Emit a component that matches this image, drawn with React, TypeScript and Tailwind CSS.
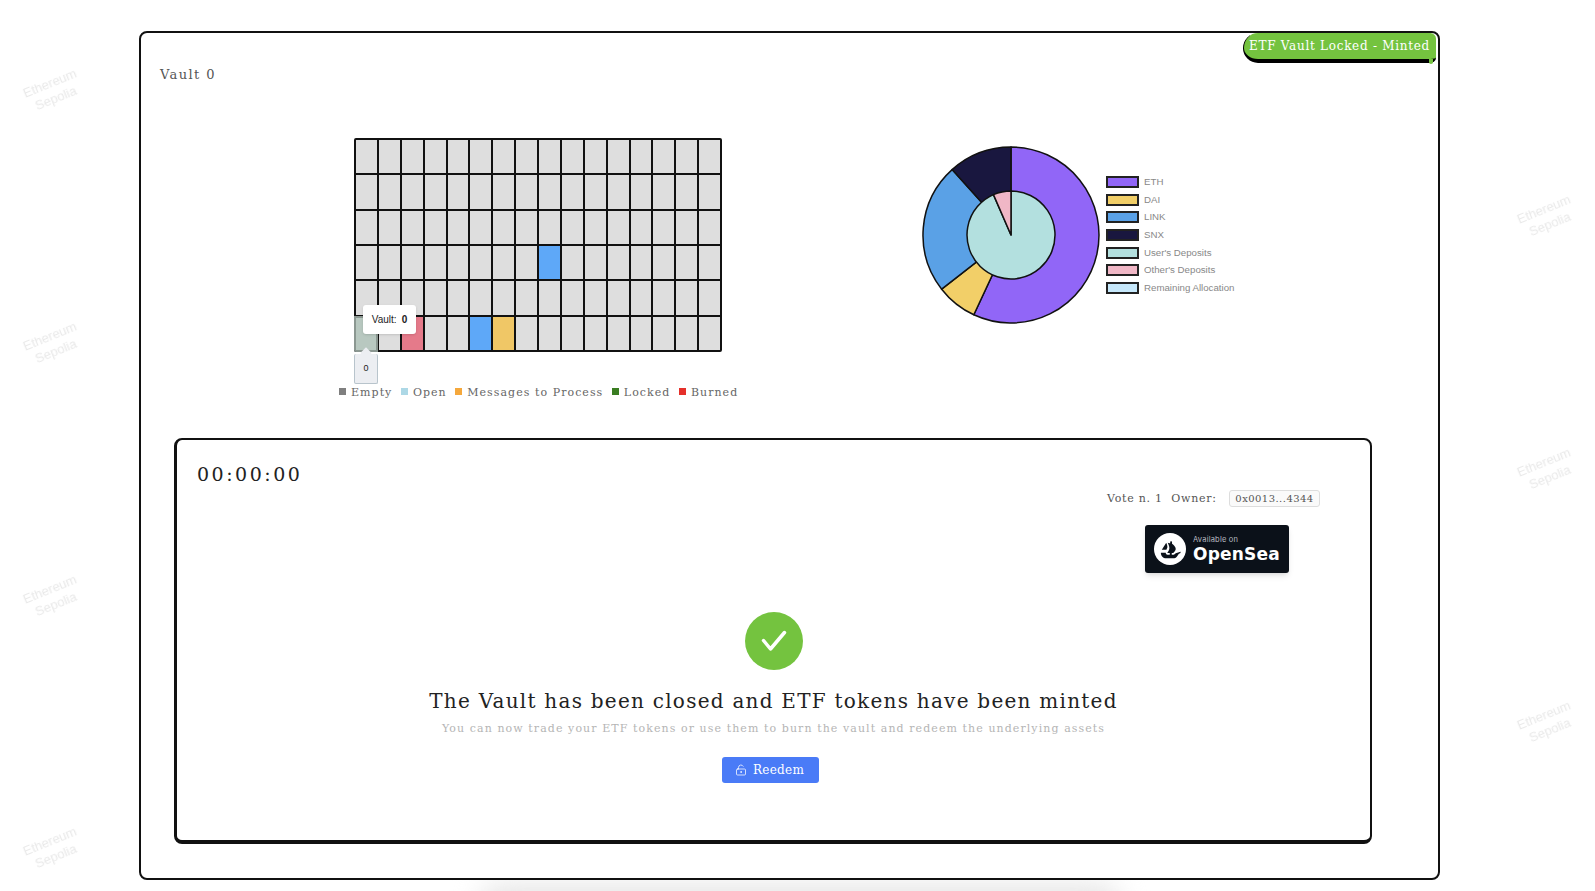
import { LockKeyholeOpen } from "lucide-react";

const CENTER = 90;
function sector(r: number, from: number, to: number) {
  const p = (a: number) => {
    const t = ((a - 90) * Math.PI) / 180;
    return `${(CENTER + r * Math.cos(t)).toFixed(2)} ${(CENTER + r * Math.sin(t)).toFixed(2)}`;
  };
  return `M${CENTER} ${CENTER} L${p(from)} A${r} ${r} 0 ${to - from > 180 ? 1 : 0} 1 ${p(to)} Z`;
}

const outer = [
  { c: "#9166f7", a: 0, b: 205 },
  { c: "#f2cf68", a: 205, b: 232 },
  { c: "#5aa1e6", a: 232, b: 318 },
  { c: "#19173f", a: 318, b: 360 },
];
const inner = [
  { c: "#b3e0df", a: 0, b: 336.5 },
  { c: "#f0b7c6", a: 336.5, b: 360 },
];
const pieLegend = [
  { c: "bg-[#9166f7]", t: "ETH" },
  { c: "bg-[#f2cf68]", t: "DAI" },
  { c: "bg-[#5aa1e6]", t: "LINK" },
  { c: "bg-[#19173f]", t: "SNX" },
  { c: "bg-[#b3e0df]", t: "User's Deposits" },
  { c: "bg-[#f0b7c6]", t: "Other's Deposits" },
  { c: "bg-[#c6e8fb]", t: "Remaining Allocation" },
];
const statusLegend = [
  { c: "bg-[#7f7f7f]", t: "Empty" },
  { c: "bg-[#add8e6]", t: "Open" },
  { c: "bg-[#f5a83c]", t: "Messages to Process" },
  { c: "bg-[#3a7d22]", t: "Locked" },
  { c: "bg-[#e5302a]", t: "Burned" },
];
const special: Record<string, string> = {
  "3-8": "bg-[#5ea8f8]",
  "5-2": "bg-[#e57a8a]",
  "5-5": "bg-[#5ea8f8]",
  "5-6": "bg-[#f0c766]",
};
const marks = [
  "left-[18px] top-[75px]",
  "left-[18px] top-[328px]",
  "left-[18px] top-[581px]",
  "left-[18px] top-[833px]",
  "left-[1512px] top-[201px]",
  "left-[1512px] top-[454px]",
  "left-[1512px] top-[707px]",
];

function Cell({ k }: { k: string }) {
  return <div className={special[k] ?? "bg-[#dedede]"} />;
}

export default function App() {
  const rows = [0, 1, 2, 3, 4, 5];
  const cols = Array.from({ length: 16 }, (_, i) => i);
  return (
    <div className="relative h-[891px] w-full overflow-hidden bg-white pt-[31px] font-['DejaVu_Serif',serif]">
      {marks.map((m) => (
        <div
          key={m}
          className={`absolute ${m} w-[70px] -rotate-[22deg] text-center font-['Liberation_Sans',sans-serif] text-[13px] leading-[16px] text-[#e9e9e9] blur-[0.5px]`}
        >
          Ethereum
          <br />
          Sepolia
        </div>
      ))}
      <div className="absolute bottom-[-34px] left-[480px] h-[40px] w-[640px] rounded-full bg-[#e4e4e4] blur-[14px]" />

      <div className="relative ml-[139px] h-[849px] w-[1301px] rounded-lg border-2 border-[#111] bg-white pt-[33px]">
        <div className="absolute right-[2px] top-0 h-[30px] w-[193px]">
          <div className="flex h-full items-start justify-center rounded-l-[16px] rounded-r-md border-b-[4px] border-l border-black bg-[#74c33f] pt-[3px] pr-[1px] text-[12px] leading-[20px] tracking-[0.72px] text-white">
            ETF Vault Locked - Minted
          </div>
          <div className="absolute bottom-[-1px] right-[3px] h-[5px] w-[4px] rounded-b-sm bg-[#74c33f]" />
        </div>

        <div className="pl-[19px] text-[13px] leading-[18px] tracking-[1.4px] text-[#555]">Vault 0</div>

        <div className="mt-[54px] flex h-[300px] items-start pl-[198px]">
          <div className="w-[410px]">
            <div className="relative ml-[15px] h-[214px] w-[368px]">
              <div className="grid h-full w-full grid-cols-16 grid-rows-6 gap-[2px] rounded-[2px] border-2 border-[#111] bg-[#111]">
                {rows.map((r) => cols.map((c) => <Cell key={`${r}-${c}`} k={`${r}-${c}`} />))}
              </div>
              <div className="absolute left-0 top-[178px] h-[36px] w-[24px] rounded-bl-[2px] border-2 border-[#8b9791] bg-[#b8c8c0]" />
              <div className="absolute left-[9px] top-[167px] flex h-[29px] w-[53px] items-center justify-center gap-[5px] rounded-[3px] bg-white font-['Liberation_Sans',sans-serif] text-[10px] text-[#222] shadow-sm">
                <span>Vault:</span>
                <span className="font-bold">0</span>
              </div>
              <div className="absolute left-[8px] top-[211px] h-[8px] w-[8px] rotate-45 bg-[#eceef2]" />
              <div className="absolute left-0 top-[216px] flex h-[30px] w-[24px] items-center justify-center rounded-[2px] border border-t-0 border-[#b8c4cc] bg-[#eceef2] font-['Liberation_Sans',sans-serif] text-[9px] text-[#222]">
                0
              </div>
            </div>
            <div className="mt-[33px] flex h-[16px] items-center whitespace-nowrap text-[11px] leading-[16px] tracking-[1.05px] text-[#666]">
              {statusLegend.map((l) => (
                <div key={l.t} className="mr-[8.5px] flex items-center gap-[5px]">
                  <span className={`mb-[4px] h-[7px] w-[7px] ${l.c}`} />
                  <span>{l.t}</span>
                </div>
              ))}
            </div>
          </div>

          <div className="ml-[172px] mt-[7px] flex items-center gap-[5px]">
            <svg width="180" height="180" viewBox="0 0 180 180" className="shrink-0">
              {outer.map((s) => (
                <path key={s.c} d={sector(88, s.a, s.b)} fill={s.c} stroke="#111" strokeWidth="1.5" strokeLinejoin="round" />
              ))}
              {inner.map((s) => (
                <path key={s.c} d={sector(44, s.a, s.b)} fill={s.c} stroke="#111" strokeWidth="1.5" strokeLinejoin="round" />
              ))}
            </svg>
            <div className="flex flex-col gap-[5.7px] font-['Liberation_Sans',sans-serif] text-[9.7px] leading-[12px] text-[#888]">
              {pieLegend.map((l) => (
                <div key={l.t} className="flex h-[12px] items-center gap-[5px] whitespace-nowrap">
                  <span className={`h-[12px] w-[33px] border-2 border-[#222] ${l.c}`} />
                  <span>{l.t}</span>
                </div>
              ))}
            </div>
          </div>
        </div>

        <div className="ml-[33px] h-[406px] w-[1198px] rounded-lg border-t-2 border-r-2 border-b-[4px] border-l-[3px] border-[#111] bg-white">
          <div className="flex items-start justify-between pt-[22px] pr-[50px] pl-[20px]">
            <div className="text-[19px] leading-[24px] tracking-[2.5px] text-[#222]">00:00:00</div>
            <div className="mt-[28px] w-[213px]">
              <div className="flex h-[17px] items-center justify-between">
                <span className="mt-[1px] whitespace-nowrap text-[11px] tracking-[0.75px] text-[#555]">Vote n. 1&nbsp;&nbsp;Owner:</span>
                <span className="flex h-[17px] w-[91px] items-center justify-center rounded-[3px] border border-[#ddd] bg-[#fafafa] text-[10px] tracking-[0.45px] text-[#555]">
                  0x0013...4344
                </span>
              </div>
              <div className="ml-[38px] mt-[18px] flex h-[48px] w-[144px] items-center rounded-[3px] bg-[#0b1119] pl-[9px] shadow-md">
                <svg width="32" height="32" viewBox="0 0 90 90" className="shrink-0">
                  <circle cx="45" cy="45" r="45" fill="#fff" />
                  <path fill="#0b1119" d="M22.200 46.500l.2-.3L34 28c.2-.3.6-.2.7.1 1.900 4.300 3.600 9.700 2.800 13-.3 1.400-1.200 3.200-2.300 5-.1.300-.3.500-.5.800-.1.100-.2.200-.4.200H22.500c-.3 0-.5-.3-.3-.6z" />
                  <path fill="#0b1119" d="M74.600 53.100v2.900c0 .2-.1.300-.3.400-.9.400-4 1.800-5.300 3.600-3.300 4.600-5.800 11.200-11.400 11.200H34.300C26 71.200 19.300 64.500 19.300 56.200v-.3c0-.2.200-.4.400-.4h13c.3 0 .5.200.5.500-.1.800.1 1.700.5 2.500.8 1.600 2.400 2.600 4.200 2.600h6.400v-5h-6.300c-.3 0-.5-.4-.3-.7.100-.1.100-.2.200-.3.600-.9 1.500-2.200 2.400-3.800.6-1.100 1.200-2.300 1.700-3.500.1-.2.200-.4.200-.6.1-.4.300-.7.400-1.100.1-.3.200-.6.300-.9.200-1.200.3-2 .3-2.900 0-.3 0-.7-.1-1 0-.4-.1-.7-.1-1.100 0-.3-.1-.6-.1-.9-.1-.5-.2-.9-.3-1.400v-.1c-.1-.4-.2-.8-.3-1.200-.3-1.100-.7-2.200-1.100-3.200-.1-.4-.3-.8-.4-1.200-.2-.6-.5-1.100-.7-1.600-.1-.2-.2-.4-.3-.6-.1-.2-.2-.4-.3-.6-.1-.1-.1-.3-.2-.4l-.8-1.500c-.1-.2.1-.5.300-.4l5 1.400.7.2.7.2.3.100v-3c0-1.400 1.100-2.600 2.600-2.600.7 0 1.400.3 1.800.8.5.5.8 1.100.8 1.800v4.400l.5.100c0 0 .1 0 .1.100.1.100.3.300.6.500.2.200.4.400.7.500.4.300.9.800 1.500 1.300.2.100.3.300.5.400.7.700 1.500 1.400 2.200 2.300.2.200.4.500.6.700.2.300.4.500.6.800.2.300.5.700.7 1 .1.200.2.300.3.500.3.500.5 1 .8 1.400.1.200.2.500.3.700.3.600.5 1.200.6 1.900 0 .1.100.3.100.4v.1c.1.200.1.500.1.700.1.700.1 1.400 0 2.200 0 .3-.1.600-.2.900-.1.300-.2.600-.3.900-.2.600-.5 1.200-.9 1.800-.1.200-.3.400-.4.600-.1.200-.3.400-.4.600-.2.300-.4.600-.6.800-.2.300-.4.500-.6.800-.3.300-.6.700-.9 1-.2.200-.4.400-.5.600-.2.200-.4.400-.6.600-.3.300-.6.600-.8.800l-.5.500c-.1.100-.2.100-.3.100h-3.900v5h4.900c1.100 0 2.100-.4 3-1.100.3-.2 1.500-1.300 3-2.900 0-.1.100-.1.200-.1l13.500-3.900c.3-.1.500.1.500.4z" />
                </svg>
                <div className="ml-[7px] flex flex-col font-['Inter',sans-serif] text-white">
                  <span className="text-[7.5px] leading-[9px] tracking-[0.2px] text-[#b8bcc2]">Available on</span>
                  <span className="mt-[1px] whitespace-nowrap font-['DejaVu_Sans',sans-serif] text-[17px] font-bold leading-[19px] tracking-[0.2px]">OpenSea</span>
                </div>
              </div>
            </div>
          </div>

          <div className="mt-[39px] flex flex-col items-center">
            <div className="flex h-[58px] w-[58px] items-center justify-center rounded-full bg-[#74c33f]">
              <svg width="28" height="24" viewBox="0 0 28 24" fill="none">
                <path d="M3.500 11.500 10.500 20 24.500 3.500" stroke="#fff" strokeWidth="3.500" strokeLinecap="round" strokeLinejoin="round" />
              </svg>
            </div>
            <div className="mt-[17px] whitespace-nowrap text-[20px] leading-[28px] tracking-[1.25px] text-[#222]">
              The Vault has been closed and ETF tokens have been minted
            </div>
            <div className="mt-[5px] whitespace-nowrap text-[11px] leading-[18px] tracking-[1.08px] text-[#b5b5b5]">
              You can now trade your ETF tokens or use them to burn the vault and redeem the underlying assets
            </div>
            <div className="mr-[6px] mt-[19px] flex h-[26px] w-[97px] items-center justify-center gap-[6px] rounded-[3px] bg-[#4a7bf7] pr-[2px] text-[12px] tracking-[0.3px] text-white">
              <LockKeyholeOpen size={12} strokeWidth={1.5} />
              <span>Reedem</span>
            </div>
          </div>
        </div>
      </div>
    </div>
  );
}
